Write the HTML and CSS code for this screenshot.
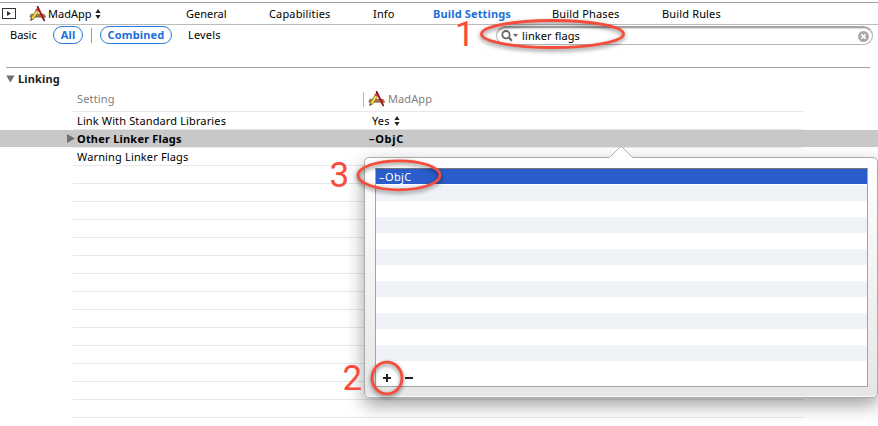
FILE: index.html
```html
<!DOCTYPE html>
<html lang="en">
<head>
<meta charset="utf-8">
<title>MadApp Build Settings</title>
<link rel="stylesheet" href="styles.css">
</head>
<body>
<svg class="defs" width="0" height="0">
  <symbol id="app" viewBox="0 0 18 16">
    <path d="M1.2 8.2h14.6l1.2 3H.6z" fill="#a9794e"/>
    <path d="M2 8.3h13M.8 11h16" stroke="#7c5637" stroke-width=".8"/>
    <path d="M8.6 4.2L3 13.2" stroke="#8b7418" stroke-width="3.2"/>
    <path d="M8.6 4.2L3.4 12.6" stroke="#f5e552" stroke-width="1.9"/>
    <path d="M7.4 4.8l1-1.8" stroke="#d9465a" stroke-width="2.6"/>
    <path d="M1.2 15.2l.6-3 2 1.4z" fill="#4a3820"/>
    <path d="M8.8 1.5L14.6 13" stroke="#a8151c" stroke-width="2"/>
    <path d="M8.2 0l1.2 2.4M14.3 12.6l1.3 2.6" stroke="#651218" stroke-width="1.5"/>
  </symbol>
  <symbol id="updown" viewBox="0 0 6 10"><path d="M3 0l2.6 4H.4zM3 10L.4 6h5.2z" fill="#222"/></symbol>
</svg>
<nav class="tabs">
  <svg class="panel" viewBox="0 0 14 11"><rect x=".5" y=".5" width="13" height="10" fill="#fff" stroke="#333"/><path d="M5 3v5l4-2.5z" fill="#333"/></svg>
  <svg class="app"><use href="#app"/></svg>
  <span class="target">MadApp</span>
  <svg class="updown"><use href="#updown"/></svg>
  <span>General</span><span class="cap">Capabilities</span><span class="info">Info</span><span class="active">Build Settings</span><span>Build Phases</span><span>Build Rules</span>
</nav>
<div class="filters">
  <span class="basic">Basic</span><span class="pill all">All</span><i class="divider"></i><span class="pill combined">Combined</span><span class="levels">Levels</span>
  <div class="search">
    <svg class="lens" viewBox="0 0 18 12"><circle cx="5" cy="4.7" r="3.7" fill="none" stroke="#666" stroke-width="1.8"/><path d="M7.8 7.6l3 3.2" stroke="#666" stroke-width="2.2"/><path d="M12 4h5l-2.5 3z" fill="#666"/></svg>
    <span class="query">linker flags</span>
    <svg class="clear" viewBox="0 0 11 11"><circle cx="5.5" cy="5.5" r="5.5" fill="#a9a9a9"/><path d="M3.4 3.4l4.2 4.2m0-4.2L3.4 7.6" stroke="#fff" stroke-width="1.5"/></svg>
  </div>
</div>
<main>
  <h2><svg class="fold" viewBox="0 0 10 8"><path d="M.3 0h9.2L4.9 8z" fill="#707070"/></svg><span>Linking</span></h2>
  <div class="row head"><span class="name">Setting</span><i class="coldiv"></i><svg class="app"><use href="#app"/></svg><span class="owner">MadApp</span></div>
  <div class="row"><span class="name link">Link With Standard Libraries</span><span class="value yes">Yes</span><svg class="updown"><use href="#updown"/></svg></div>
  <div class="selected"><svg class="expand" viewBox="0 0 8 9"><path d="M0 0l8 4.5L0 9z" fill="#707070"/></svg><span class="name">Other Linker Flags</span><span class="value">–ObjC</span></div>
  <div class="row"><span class="name warn">Warning Linker Flags</span></div>
  <div class="empty"></div>
</main>
<section class="popover">
  <svg class="arrow" viewBox="0 0 24 13"><path d="M0 11.5L11 .7q1-.7 2 0L24 11.5V13H0z" fill="#fff"/><path d="M0 11.5h.5L11 1q1-.7 2 0l10.5 10.5h.5" fill="none" stroke="#b0b0b0"/></svg>
  <div class="list">
    <div class="item">–ObjC</div>
    <div class="stripes"></div>
    <div class="buttons"><svg viewBox="0 0 32 8"><path d="M0 4h8M4 0v8M22 4h8" stroke="#222" stroke-width="2"/></svg></div>
  </div>
</section>
<svg class="marks" viewBox="0 0 878 426">
  <g class="rings"><ellipse cx="552.5" cy="34" rx="71" ry="13.5"/><ellipse cx="399" cy="175.3" rx="41" ry="14.5"/><ellipse cx="387" cy="378" rx="15" ry="15.8"/></g>
  <g class="digits"><text x="455" y="46">1</text><text x="342.5" y="390">2</text><text x="329.5" y="187">3</text></g>
</svg>
</body>
</html>
```
FILE: styles.css
```css
* { box-sizing: border-box; }
body { margin: 0; width: 878px; height: 426px; overflow: hidden; position: relative; background: #fff; color: #000; font: 11px/14px "Noto Sans", sans-serif; letter-spacing: .15px; white-space: nowrap; }
svg { display: block; }
.defs { position: absolute; }
.app { width: 18px; height: 16px; }
.updown { width: 6px; height: 10px; }
.tabs { margin-top: 2px; height: 23px; border-top: 1px solid #a0a0a0; border-bottom: 1px solid #bcbcbc; display: grid; grid-template-columns: 27px 19px 48px 90px 83px 103px 61px 119px 110px 1fr; align-items: center; padding-left: 2px; }
.panel { width: 14px; height: 11px; }
.target { letter-spacing: 0; }
.updown { margin-left: -1px; }
.tabs span:nth-of-type(2) { letter-spacing: 0; }
.info { padding-left: 1px; }
.active { color: #1d6fd8; font-weight: 700; }
.filters { height: 42px; display: flex; align-items: flex-start; padding-top: 1px; }
.filters > span { line-height: 18px; }
.basic { width: 43px; margin-left: 10px; letter-spacing: 0; }
.pill { height: 18px; border: 1px solid #2a7ae0; border-radius: 9px; color: #1d6fd8; font-weight: 700; text-align: center; }
.filters .pill { line-height: 16px; }
.all { width: 30px; }
.divider { width: 1px; height: 15px; margin: 2px 8px 0; background: #999; }
.combined { width: 72px; }
.levels { width: 324px; padding-left: 16px; }
.search { width: 377px; height: 19px; border: 1px solid #b5b5b5; border-top: 2px solid #a5a5a5; border-radius: 10px; box-shadow: inset 0 1px 1px #ddd; display: flex; align-items: center; padding: 0 3px 0 4px; }
.lens { width: 18px; height: 12px; margin-right: 3px; }
.query { flex: 1; letter-spacing: .1px; }
.clear { width: 11px; height: 11px; }
h2 { margin: 0 8px 0 6px; height: 22px; border-top: 1px solid #a0a0a0; font-size: 11px; line-height: 14px; color: #222; display: flex; align-items: center; }
.fold { width: 9px; height: 8px; margin-right: 3px; }
.row { height: 18px; margin-left: 73px; width: 730px; border-bottom: 1px solid #e7e7e7; display: flex; align-items: center; }
.head { height: 23px; color: #808080; padding-bottom: 2px; }
.name { width: 295px; padding-left: 4px; }
.link { letter-spacing: .13px; }
.head .name { width: 290px; }
.coldiv { width: 1px; height: 15px; background: #bbb; margin-right: 4px; }
.owner { padding-left: 2px; letter-spacing: .1px; }
.value.yes { width: 27px; padding-left: 4px; }
.selected { height: 18px; background: linear-gradient(#c8c8c8, #c8c8c8) 0 0 / 100% 17px no-repeat, linear-gradient(#e7e7e7, #e7e7e7) 73px 17px / 730px 1px no-repeat; display: flex; align-items: center; padding: 0 0 1px 67px; font-weight: 700; }
.expand { width: 8px; height: 9px; }
.selected .name { padding-left: 2px; width: 294px; letter-spacing: .2px; }
.selected .value { letter-spacing: .7px; }
.empty { height: 252px; width: 730px; margin-left: 73px; background: repeating-linear-gradient(#fff 0 17px, #e7e7e7 17px 18px); }
.popover { position: absolute; left: 364px; top: 157px; width: 514px; height: 241px; padding: 10px; border: 1px solid #aaa; border-radius: 5px; background: linear-gradient(#fff, #e6e6e6); box-shadow: inset 0 -1px #fafafa, 0 7px 18px rgba(0,0,0,.38); }
.arrow { position: absolute; left: 244px; top: -12px; width: 24px; height: 13px; }
.list { width: 493px; height: 219px; border: 1px solid #a3a3a3; border-top-color: #777; background: #fff; }
.item { height: 15px; margin-bottom: 1px; line-height: 16px; background: #2a5dcb; color: #fff; padding-left: 3px; letter-spacing: .4px; }
.stripes { height: 176px; background: repeating-linear-gradient(#eff3f8 0 16px, #fff 16px 32px); }
.buttons { padding: 13px 7px 0; }
.buttons svg { width: 32px; height: 8px; }
.marks { position: absolute; left: 0; top: 0; width: 878px; height: 426px; }
.rings { fill: none; stroke: #f64c3c; stroke-width: 2.8; filter: drop-shadow(0 2px 2px rgba(0,0,0,.5)); }
.digits { fill: #fa4a3c; font: 35px Roboto, sans-serif; letter-spacing: 0; }
```
